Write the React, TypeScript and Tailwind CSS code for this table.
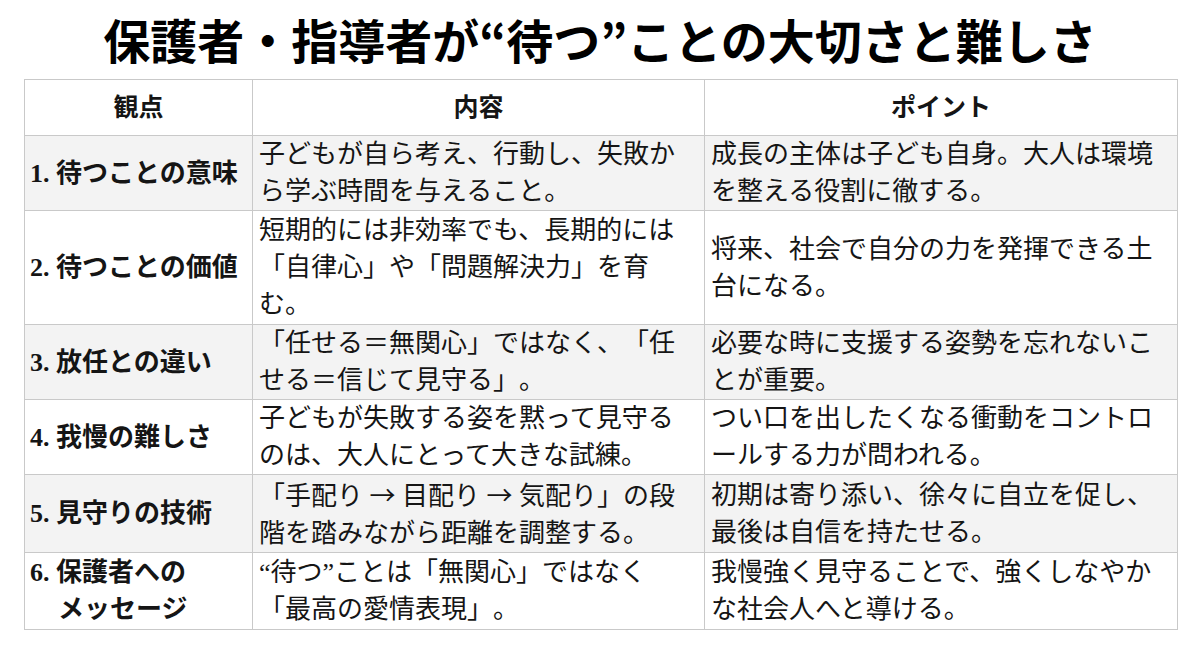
import React from 'react';

type Row = {
  label: React.ReactNode;
  content: string[];
  point: string[];
  height: string;
  shaded: boolean;
};

const rows: Row[] = [
  {
    label: '1. 待つことの意味',
    content: ['子どもが自ら考え、行動し、失敗か', 'ら学ぶ時間を与えること。'],
    point: ['成長の主体は子ども自身。大人は環境', 'を整える役割に徹する。'],
    height: 'h-[74px]',
    shaded: true,
  },
  {
    label: '2. 待つことの価値',
    content: ['短期的には非効率でも、長期的には', '「自律心」や「問題解決力」を育', 'む。'],
    point: ['将来、社会で自分の力を発揮できる土', '台になる。'],
    height: 'h-[114px]',
    shaded: false,
  },
  {
    label: '3. 放任との違い',
    content: ['「任せる＝無関心」ではなく、「任', 'せる＝信じて見守る」。'],
    point: ['必要な時に支援する姿勢を忘れないこ', 'とが重要。'],
    height: 'h-[75px]',
    shaded: true,
  },
  {
    label: '4. 我慢の難しさ',
    content: ['子どもが失敗する姿を黙って見守る', 'のは、大人にとって大きな試練。'],
    point: ['つい口を出したくなる衝動をコントロ', 'ールする力が問われる。'],
    height: 'h-[73px]',
    shaded: false,
  },
  {
    label: '5. 見守りの技術',
    content: ['「手配り → 目配り → 気配り」の段', '階を踏みながら距離を調整する。'],
    point: ['初期は寄り添い、徐々に自立を促し、', '最後は自信を持たせる。'],
    height: 'h-[78px]',
    shaded: true,
  },
  {
    label: (
      <>
        6. 保護者への
        <br />
        <span className="pl-[28px]">メッセージ</span>
      </>
    ),
    content: ['“待つ”ことは「無関心」ではなく', '「最高の愛情表現」。'],
    point: ['我慢強く見守ることで、強くしなやか', 'な社会人へと導ける。'],
    height: 'h-[77px]',
    shaded: false,
  },
];

// arrows come out tiny in the serif face, so give them the CJK one
const withArrows = (line: string) =>
  line.split('→').map((part, j) => (
    <React.Fragment key={j}>
      {j > 0 && <span className="font-['Noto_Sans_CJK_JP',sans-serif]">→</span>}
      {part}
    </React.Fragment>
  ));

const Lines = ({ lines }: { lines: string[] }) => (
  <>
    {lines.map((l, i) => (
      <React.Fragment key={i}>
        {i > 0 && <br />}
        {withArrows(l)}
      </React.Fragment>
    ))}
  </>
);

export default function App() {
  return (
    <div className="w-[1200px] h-[659px] bg-white text-[#151515] [text-spacing-trim:space-all] font-['Liberation_Serif','Noto_Sans_CJK_JP',serif]">
      {/* Title */}
      <div className="h-[79px] flex items-center justify-center pb-[2px]">
        <h1 className="text-[47px] leading-none font-bold font-['Noto_Sans_CJK_JP',sans-serif] text-black">
          保護者・指導者が“待つ”ことの大切さと難しさ
        </h1>
      </div>

      <div className="px-[24px]">
        <table className="w-[1153px] border-collapse table-fixed">
          <colgroup>
            <col className="w-[228px]" />
            <col className="w-[452px]" />
            <col className="w-[473px]" />
          </colgroup>
          <thead>
            <tr className="h-[56px] bg-white">
              <th className="border border-[#c9c9c9] text-[25px] font-bold text-center align-middle">観点</th>
              <th className="border border-[#c9c9c9] text-[25px] font-bold text-center align-middle">内容</th>
              <th className="border border-[#c9c9c9] text-[25px] font-bold text-center align-middle">ポイント</th>
            </tr>
          </thead>
          <tbody>
            {rows.map((r, i) => (
              <tr key={i} className={`${r.height} ${r.shaded ? 'bg-[#f3f3f3]' : 'bg-white'}`}>
                <td className="border border-[#c9c9c9] pl-[5px] pr-[4px] align-middle text-[26px] leading-[37px] font-bold">
                  {r.label}
                </td>
                <td className="border border-[#c9c9c9] px-[6px] align-middle text-[26px] leading-[37px] whitespace-nowrap">
                  <Lines lines={r.content} />
                </td>
                <td className="border border-[#c9c9c9] px-[6px] align-middle text-[26px] leading-[37px] whitespace-nowrap">
                  <Lines lines={r.point} />
                </td>
              </tr>
            ))}
          </tbody>
        </table>
      </div>
    </div>
  );
}
